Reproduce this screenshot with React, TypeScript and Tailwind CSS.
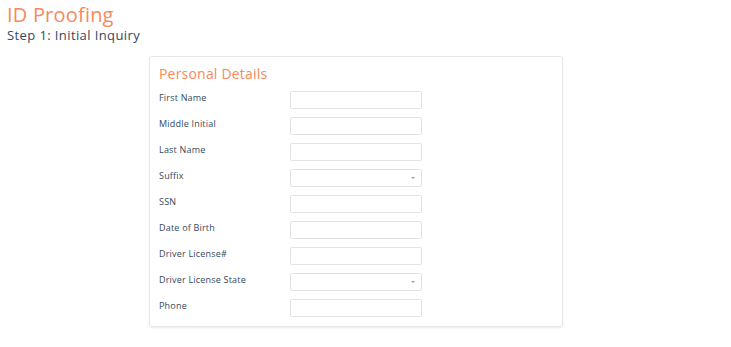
const fields = [
  { label: "First Name", type: "text" },
  { label: "Middle Initial", type: "text" },
  { label: "Last Name", type: "text" },
  { label: "Suffix", type: "select" },
  { label: "SSN", type: "text" },
  { label: "Date of Birth", type: "text" },
  { label: "Driver License#", type: "text" },
  { label: "Driver License State", type: "select" },
  { label: "Phone", type: "text" },
];

export default function App() {
  return (
    <div className="min-h-[347px] bg-white font-['Open_Sans',sans-serif]">
      {/* Page header */}
      <div className="px-[7px] pt-[3px]">
        <h1 className="text-[20px] leading-[24px] text-[#f7895b] font-normal tracking-[0.2px]">ID Proofing</h1>
        <h2 className="text-[13px] leading-[16px] text-[#34495e] tracking-[0.4px]">Step 1: Initial Inquiry</h2>
      </div>

      {/* Card */}
      <div className="ml-[149px] mt-[13px] w-[414px] rounded-[3px] border border-[#e6e6e6] shadow-[0_1px_2px_rgba(0,0,0,0.08)] px-[9px] pt-[8px] pb-[9px]">
        <h3 className="text-[14px] leading-[18px] text-[#f7895b] mb-[8px] tracking-[0.2px]">Personal Details</h3>
        <div className="flex flex-col gap-[8px]">
          {fields.map((f) => (
            <div key={f.label} className="flex items-start">
              <label className="w-[131px] pt-[1px] text-[9px] leading-[12px] font-medium tracking-[0.2px] text-[#34495e]">
                {f.label}
              </label>
              <div className="relative w-[132px] h-[18px] rounded-[2px] border border-[#e3e3e3] bg-white">
                {f.type === "select" && (
                  <span className="absolute right-[6px] top-[7px] w-0 h-0 border-l-[2px] border-r-[2px] border-t-[2px] border-l-transparent border-r-transparent border-t-[#8aa2b8]" />
                )}
              </div>
            </div>
          ))}
        </div>
      </div>
    </div>
  );
}
